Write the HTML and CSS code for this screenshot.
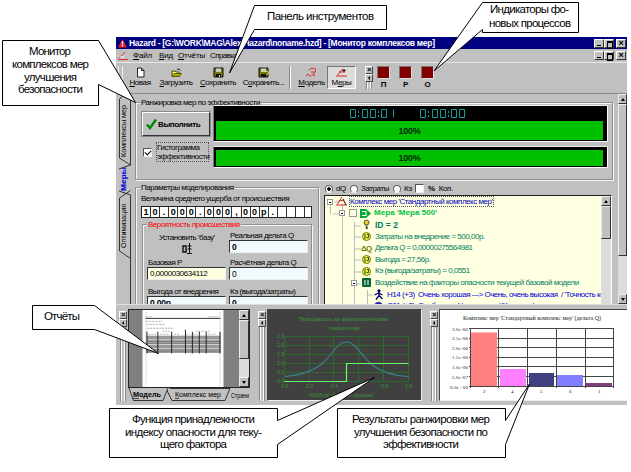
FILE: index.html
```html
<!DOCTYPE html>
<html lang="ru">
<head>
<meta charset="utf-8">
<title>Hazard</title>
<link rel="stylesheet" href="styles.css">
</head>
<body>
<div class="window">
  <header class="titlebar">
    <svg class="app-icon" viewBox="0 0 10 10"><path d="M5 0 10 9.5H0Z" fill="#e02020"/><path d="M5 2.5V6M5 7v1.4" stroke="#fff" stroke-width="1.5"/></svg>
    <span class="caption">Hazard - [G:\WORK\MAG\Alex\Hazard\noname.hzd] - [Монитор комплексов мер]</span>
    <span class="winbtns"><i class="b3 min"></i><i class="b3 res"></i><i class="b3 cls">×</i></span>
  </header>
  <nav class="menu">
    <svg class="menu-icon" viewBox="0 0 10 10"><path d="M7 1 1 7.5M0 8.500H10" stroke="#e03030" fill="none"/><path d="M2 6H6" stroke="#fff"/></svg>
    <span class="m1"><u>Ф</u>айл</span><span class="m2"><u>В</u>ид</span><span class="m3"><u>О</u>тчёты</span><span class="m4">Справка</span>
    <span class="winbtns"><i class="b3 min"></i><i class="b3 res"></i><i class="b3 cls">×</i></span>
  </nav>
  <div class="toolbar">
    <i class="grip"></i>
    <div class="tool t1"><svg viewBox="0 0 11 11"><path d="M2.500 1H6.500L9 3.500V10H2.500Z" fill="#fff" stroke="#222"/><path d="M6.500 1V3.500H9" fill="none" stroke="#222"/></svg><span><u>Н</u>овая</span></div>
    <div class="tool t2"><svg viewBox="0 0 11 11"><path d="M1 9V4H4L5 5H8V6.500" fill="#ff6" stroke="#440"/><path d="M1 9.500 3 6.500H10.500L8.500 9.500Z" fill="#aa0" stroke="#440" stroke-width=".8"/><path d="M6 2.500Q8 1 9.500 3.500" fill="none" stroke="#222"/></svg><span><u>З</u>агрузить</span></div>
    <div class="tool t3"><svg viewBox="0 0 11 11"><path d="M1 1H10V10H1Z" fill="#770" stroke="#111"/><path d="M3 1.500H8V5H3Z" fill="#ccc"/><path d="M3 7H8V10H3Z" fill="#111"/><path d="M6 8h1v2H6z" fill="#ddd"/></svg><span><u>С</u>охранить</span></div>
    <div class="tool t4"><svg viewBox="0 0 11 11"><path d="M1 1H10V10H1Z" fill="#770" stroke="#111"/><path d="M3 1.500H8V5H3Z" fill="#ccc"/><path d="M3 7H8V10H3Z" fill="#111"/><path d="M7 4.500 9 4 10.500 6 9 8" fill="none" stroke="#ee3"/></svg><span>С<u>о</u>хранить...</span></div>
    <i class="vsep"></i>
    <div class="tool t5"><svg viewBox="0 0 11 11"><path d="M3 3.500Q4 0 9.500 2V5H5M8 5V8M0 9 2 7 4 9.500 6 7.500 9 9" fill="none" stroke="#d33"/></svg><span><u>М</u>одель</span></div>
    <div class="tool t6"><svg viewBox="0 0 11 11"><path d="M7 1.500 1.500 8M3 5H9M0 9H11" fill="none" stroke="#d22"/><path d="M8 2v3M6.500 3.500h3" stroke="#111"/></svg><span>М<u>е</u>ры</span></div>
    <div class="dockctl small"><i class="x">×</i><i class="a"></i><i class="bars"></i></div>
    <div class="lamp"><i></i>П</div><div class="lamp"><i></i>Р</div><div class="lamp"><i></i>О</div>
  </div>
  <main class="work">
    <aside class="tabs">
      <svg viewBox="0 0 15 210">
        <path d="M14.500 96.500 3.500 104V157L14.500 164.500" fill="#c0c0c0" stroke="#333"/>
        <path d="M14.500 0.500 9 0.500 3.500 5V64L14.500 71" fill="#c0c0c0" stroke="#333"/>
        <path d="M14.500 0V71L3 75M3 97 14.500 101V210" fill="none" stroke="#333"/>
        <text transform="translate(10 63) rotate(-90)" textLength="52" lengthAdjust="spacingAndGlyphs">Комплексы мер</text>
        <text class="on" transform="translate(10 97) rotate(-90)" textLength="24" lengthAdjust="spacingAndGlyphs">Меры</text>
        <text transform="translate(10 154) rotate(-90)" textLength="44" lengthAdjust="spacingAndGlyphs">Оптимизация</text>
      </svg>
    </aside>
    <div class="page">
      <fieldset class="rank">
        <legend>Ранжировка мер по эффективности</legend>
        <div class="rank-left">
          <button class="run"><svg viewBox="0 0 11 12"><path d="M1 6.500 4 10 10 1.500" fill="none" stroke="#080" stroke-width="2.400"/></svg>Выполнить</button>
          <label class="histo"><i class="cb on"></i><span>Гистограмма<br>эффективности</span></label>
        </div>
        <div class="bars-col">
          <div class="black big">
            <svg class="lcd" viewBox="0 0 387 12"><g fill="none" stroke="#189a9a">
              <path d="M134.500 1.500h5v8h-5zM146.500 1.500h5v8h-5zM154.500 1.500h5v8h-5zM165.500 1.500h5v8h-5zM177.500 1.500v8M142.500 3v2M142.500 7v2M162.500 3v2M162.500 7v2"/>
              <path d="M204.500 1.500h5v8h-5zM216.500 1.500h5v8h-5zM224.500 1.500h5v8h-5zM235.500 1.500h5v8h-5zM243.500 1.500h5v8h-5zM212.500 3v2M212.500 7v2M232.500 3v2M232.500 7v2"/></g></svg>
            <div class="green">100%</div>
          </div>
          <div class="black"><div class="green">100%</div></div>
        </div>
      </fieldset>
      <div class="columns">
        <fieldset class="params">
          <legend>Параметры моделирования</legend>
          <div class="avg">Величина среднего ущерба от происшествия</div>
          <div class="cells"><i>1</i><i>0</i><i>.</i><i>0</i><i>0</i><i>0</i><i>.</i><i>0</i><i>0</i><i>0</i><i>,</i><i>0</i><i>0</i><i>р</i><i>.</i><i></i><i></i><i></i><i></i></div>
          <fieldset class="prob">
            <legend>Вероятность происшествия</legend>
            <div class="grid">
              <div class="base">Установить 'базу'<svg viewBox="0 0 12 11"><path d="M2 3h3v6H2z" fill="none" stroke="#111" stroke-width="1.400"/><path d="M8.500 0V10M6 10.500H11M6.500 3H10.500M6.500 6H10.500" stroke="#111"/></svg></div>
              <div class="f real"><span>Реальная дельта Q</span><b class="in">0</b></div>
              <div class="f"><span>Базовая P</span><b class="in yel">0,0000030634112</b></div>
              <div class="f"><span>Расчётная дельта Q</span><b class="in thin">0</b></div>
              <div class="f"><span>Выгода от внедрения</span><b class="in">0,00р</b></div>
              <div class="f"><span>Кэ (выгода/затраты)</span><b class="in">0</b></div>
            </div>
          </fieldset>
        </fieldset>
        <section class="right">
          <div class="radios">
            <i class="rd on"></i><span class="r1">dQ</span><i class="rd"></i><span class="r2">Затраты</span><i class="rd"></i><span class="r3">Кэ</span><i class="cb"></i><b class="r4">%</b><span>Коп.</span>
          </div>
          <div class="tree">
            <div class="rows">
              <svg class="lines" viewBox="0 0 276 109"><path d="M9.500 6H14M5.500 8V18M17.500 8V109M8 18H14M29.500 26V109M29.500 30H36M29.500 41H36M29.500 53H36M29.500 64H36M29.500 76H36M29.500 88H36M42.500 94V109M42.500 99H48" fill="none" stroke="#bbb"/></svg>
              <div class="row l0"><i class="pm"></i><svg class="ic" viewBox="0 0 11 11"><path d="M6 1 1.500 8M3 5 8 4M0 9H11" fill="none" stroke="#d22"/><path d="M7 3 10 9" stroke="#111"/></svg><span class="sel">Комплекс мер 'Стандартный комплекс мер'</span></div>
              <div class="row l1"><i class="pm"></i><i class="sq"></i><svg class="ic" viewBox="0 0 11 11"><path d="M0 1H6L11 5.500 6 10H0Z" fill="#0a3"/><path d="M2 3.500H6M2 7.500H6M6 3v5" stroke="#fff"/></svg><span>Мера 'Мера 500'</span></div>
              <div class="row l2 bold"><svg class="ic" viewBox="0 0 11 11"><circle cx="5.500" cy="3.500" r="2.500" fill="#dc3" stroke="#552"/><path d="M5.500 6V10M5.500 9H7" stroke="#552" stroke-width="1.500"/></svg><span>ID = 2</span></div>
              <div class="row l2"><svg class="ic" viewBox="0 0 11 11"><circle cx="5.500" cy="5.500" r="4" fill="#ee4" stroke="#770"/><path d="M4 3v5M6 3.500h1.500v3H5.500" fill="none" stroke="#252"/></svg><span>Затраты на внедрение = 500,00р.</span></div>
              <div class="row l2"><b class="ic dq">ΔQ</b><span class="w4">Дельта Q = 0,00000275564981</span></div>
              <div class="row l2"><svg class="ic" viewBox="0 0 11 11"><circle cx="5.500" cy="5.500" r="4" fill="#ee4" stroke="#770"/><path d="M4 3v5M6 3.500h1.500v3H5.500" fill="none" stroke="#252"/></svg><span>Выгода = 27,56р.</span></div>
              <div class="row l2"><svg class="ic" viewBox="0 0 11 11"><circle cx="5.500" cy="5.500" r="4" fill="#ee4" stroke="#770"/><path d="M4 3v5M6 3.500h1.500v3H5.500" fill="none" stroke="#252"/></svg><span>Кэ (выгода/затраты) = 0,0551</span></div>
              <div class="row l2 sub"><i class="pm"></i><svg class="ic" viewBox="0 0 11 11"><rect x="1" y="1" width="9" height="9" rx="1" fill="#063"/><path d="M4 3v5M7 3v5" stroke="#fff"/></svg><span>Воздействие на факторы опасности текущей базовой модели</span></div>
              <div class="row l3"><svg class="ic" viewBox="0 0 11 11"><circle cx="6" cy="1.800" r="1.600" fill="#007"/><path d="M6 3V6.500L3 10.500M6 6.500 9.500 10M1.500 6 5.500 4 9.500 6" fill="none" stroke="#007" stroke-width="1.300"/></svg><span>H14 (+3)&nbsp; Очень хорошая ---&gt; Очень, очень высокая&nbsp; / 'Точность контроля'</span></div>
              <div class="row l3"><svg class="ic" viewBox="0 0 11 11"><circle cx="5.500" cy="5.500" r="4.500" fill="#22a"/></svg><span>С01 (+2)&nbsp; Слабая ---&gt; Умеренная&nbsp; / 'Качество'</span></div>
            </div>
            <div class="sb"><i class="up"></i><i class="thumb t33"></i></div>
          </div>
        </section>
      </div>
    </div>
    <div class="sb main-sb"><i class="up"></i><i class="thumb t150"></i><i class="track"></i><i class="dn"></i></div>
  </main>
  <footer class="docks">
    <div class="dockctl"><i class="x">×</i><i class="a"></i><i class="bars"></i></div>
    <section class="report">
      <div class="preview">
        <svg class="paper" viewBox="0 0 82 78"><rect width="82" height="78" fill="#fff"/>
          <path d="M3.500 2V78M78.500 2V78" stroke="#bbb" stroke-dasharray="1 1"/>
          <path d="M3 8.500H79" stroke="#333"/><path d="M4 7h5M66 7h12M4 11.500h16M5 14.500h18M5 18.500h26" stroke="#aaa" stroke-dasharray="2 1"/>
          <path d="M20 21.500h8M54 21.500h14M6 24.500h8M18 24.500h8M32 24.500h6M44 24.500h4M51 24.500h4M66 24.500h9" stroke="#bbb" stroke-dasharray="2 1"/>
          <rect x="4" y="26" width="75" height="4" fill="#999"/><rect x="4" y="35" width="75" height="4" fill="#999"/>
          <path d="M4 31.500H79M4 33.500H79M4 40.500H79M4 42.500H79" stroke="#222"/>
          <path d="M4.500 22V44M15.500 22V44M29.500 22V44M43.500 20V44M50.500 22V44M57.500 22V44M64.500 22V44M78.500 22V44" stroke="#222"/></svg>
        <div class="sb"><i class="up"></i><i class="thumb t38"></i><i class="track"></i><i class="dn"></i></div>
      </div>
      <svg class="sheet-tabs" viewBox="0 0 122 14"><path d="M42 0.500H102L97 12.500H44L38 0.500" fill="#c0c0c0" stroke="#333"/><path d="M1 0 5.500 12.500H35L40 0" fill="#c0c0c0" stroke="#333"/>
        <text class="b" x="5" y="9" textLength="28" lengthAdjust="spacingAndGlyphs">Модель</text><text x="47" y="9" textLength="46" lengthAdjust="spacingAndGlyphs">Комплекс мер</text><text x="103" y="10" textLength="18" lengthAdjust="spacingAndGlyphs">Страни</text><path d="M5 10.500h6M47 10.500h4" stroke="#111" stroke-width=".7"/></svg>
    </section>
    <div class="dockctl d2"><i class="x">×</i><i class="a"></i><i class="bars"></i></div>
    <svg class="chart dark" viewBox="0 0 153 90">
      <rect width="153" height="90" fill="#404040"/>
      <g class="gt"><text x="31" y="11" textLength="89" lengthAdjust="spacingAndGlyphs">Пригодность по физиологическим</text><text x="61" y="19.500" textLength="30" lengthAdjust="spacingAndGlyphs">показателям</text><text x="41" y="86.500" textLength="64" lengthAdjust="spacingAndGlyphs">Н01(Игра) =0 - Полёт (среднее)</text>
      <text x="9" y="28">2.3</text><text x="9" y="37">2.0</text><text x="9" y="46">1.5</text><text x="9" y="55">1.0</text><text x="9" y="64">0.1</text><text x="9" y="73">0.0</text>
      <text x="13" y="77.500">0.0</text><text x="38" y="77.500">0.2</text><text x="63" y="77.500">0.4</text><text x="88" y="77.500">0.6</text><text x="113" y="77.500">0.8</text><text x="137" y="77.500">1.0</text></g>
      <path d="M16.500 26.500H140.500M16.500 35.500H140.500M16.500 44.500H140.500M16.500 53.500H140.500M16.500 62.500H140.500M16.500 71.500H140.500M16.500 26.500V72M41.500 26.500V72M65.500 26.500V72M90.500 26.500V72M115.500 26.500V72M140.500 26.500V72" stroke="#2c6a2c" fill="none"/>
      <path d="M16.500 66.500C36 65 48 60 57 51C66 42 70 32 78.500 32C87 32 93 45 103 54C113 62 124 66 140.500 66.500" fill="none" stroke="#3c8088" stroke-width="1.100"/>
      <path d="M16.500 71.500H78.500V53.500H140.500" fill="none" stroke="#6f6" stroke-width="1.200"/>
    </svg>
    <div class="dockctl d3"><i class="x">×</i><i class="a"></i><i class="bars"></i></div>
    <svg class="chart light" viewBox="0 0 187 90">
      <rect width="187" height="90" fill="#fff"/>
      <g class="bt"><text x="23" y="10" textLength="138" lengthAdjust="spacingAndGlyphs" class="ttl">Комплекс мер 'Стандартный комплекс мер' (дельта Q)</text>
      <text x="12" y="20.500" textLength="16">3.0e-06</text><text x="12" y="30" textLength="16">2.5e-06</text><text x="12" y="39.500" textLength="16">2.0e-06</text><text x="12" y="49" textLength="16">1.5e-06</text><text x="12" y="59" textLength="16">1.0e-06</text><text x="12" y="68.500" textLength="16">5.0e-07</text><text x="10" y="78.500" textLength="18">0.0e+00</text>
      <text x="43" y="83">2</text><text x="71" y="83">4</text><text x="100" y="83">5</text><text x="129" y="83">6</text><text x="158" y="83">1</text></g>
      <path d="M29 18.500H173.500M29 28.500H173.500M29 37.500H173.500M29 47.500H173.500M29 56.500H173.500M29 66.500H173.500M29 76.500H173.500M30.500 18V78M58.500 18V78M87.500 18V78M116.500 18V78M145.500 18V78M173.500 18V78" fill="none" stroke="#444"/>
      <path d="M31 22h26v54H31z" fill="#ff8080"/><path d="M31 22.500h26" stroke="#fbb"/><path d="M60 59h26v17H60z" fill="#ff80ff"/><path d="M89 63h25v13H89z" fill="#404080"/><path d="M117 65h26v11H117z" fill="#8080ff"/><path d="M146 73h26v3H146z" fill="#804080"/>
    </svg>
  </footer>
</div>

<svg class="callouts" viewBox="0 0 631 472">
  <g fill="#fff" stroke="#000">
    <path d="M254.500 5.500H386.500V29.500H254.500L229.500 73Z"/>
    <path d="M482.500 2.500H578.500V32.500H482.500V29.500L434 71Z"/>
    <path d="M2.500 40.500H98.500L135.500 102.500 98.500 84.500V105.500H2.500Z"/>
    <path d="M32.500 305.500H94.500L158.500 353.500 94.500 329.500H32.500Z"/>
    <path d="M109.500 408.500H277.500V420.500L374.500 377.500 277.500 444.500V457.500H109.500Z"/>
    <path d="M337.500 408.500H505.500V420.500L529.500 384 505.500 444.500V457.500H337.500Z"/>
  </g>
  <g class="note">
    <text x="267" y="20" textLength="107">Панель инструментов</text>
    <text x="490" y="13" textLength="79">Индикаторы фо-</text><text x="489" y="27" textLength="82">новых процессов</text>
    <text x="29" y="55" textLength="42">Монитор</text><text x="12" y="68" textLength="77">комплексов мер</text><text x="24" y="81" textLength="53">улучшения</text><text x="18" y="93" textLength="65">безопасности</text>
    <text x="44" y="320" textLength="36">Отчёты</text>
    <text x="132" y="423" textLength="123">Функция принадлежности</text><text x="125" y="436" textLength="137">индексу опасности для теку-</text><text x="160" y="448" textLength="67">щего фактора</text>
    <text x="352" y="423" textLength="138">Результаты ранжировки мер</text><text x="354" y="436" textLength="134">улучшения безопасности по</text><text x="383" y="448" textLength="76">эффективности</text>
  </g>
</svg>
</body>
</html>
```
FILE: styles.css
```css
* { box-sizing: border-box; }
body { margin: 0; width: 631px; height: 472px; overflow: hidden; position: relative; background: #fff; }
i { font-style: normal; display: block; flex: none; }
svg { display: block; flex: none; }
u { text-underline-offset: 1px; text-decoration-thickness: 1px; }
.window { margin: 37px 0 0 116px; width: 511px; height: 368px; background: #c0c0c0; overflow: hidden;
  font: 8px/10px "Liberation Sans", sans-serif; letter-spacing: -.47px; color: #000; white-space: nowrap; }

.titlebar { height: 12px; background: #000080; color: #fff; display: flex; align-items: center; padding: 0 1px 0 2px; }
.app-icon { width: 9px; height: 9px; margin-right: 2px; }
.caption { font: bold 8.5px/12px "Liberation Sans", sans-serif; letter-spacing: -.29px; }
.winbtns { margin-left: auto; display: flex; }
.b3 { width: 10px; height: 9px; background: #c0c0c0; border: 1px solid; border-color: #fff #333 #333 #fff; color: #000; font: bold 9px/7px "Liberation Sans", sans-serif; text-align: center; }
.cls { margin-left: 2px; }
.min { padding: 5px 2px 0; }
.min::after { content: ""; display: block; height: 1px; background: #000; width: 4px; }
.res { padding: 1px 2px; }
.res::after { content: ""; display: block; width: 4px; height: 5px; border: 1px solid #000; border-top-width: 2px; }

.menu { height: 13px; display: flex; align-items: center; padding: 0 1px 0 2px; letter-spacing: -.15px; }
.menu-icon { width: 10px; height: 10px; margin-right: 5px; }
.m1 { width: 26px; } .m2 { width: 19px; } .m3 { width: 32px; }
.m4 { letter-spacing: -.6px; }

.toolbar { height: 32px; border-top: 1px solid #e8e8e8; border-bottom: 1px solid #888; display: flex; padding-top: 3px; }
.grip { width: 5px; height: 24px; margin: 0 0 0 2px; border: solid #eee; border-width: 0 1px; }
.tool { display: flex; flex-direction: column; align-items: center; height: 23px; letter-spacing: -.4px; }
.tool svg { width: 11px; height: 11px; margin-top: 1px; }
.tool span { line-height: 10px; }
.t1 { width: 34px; } .t2 { width: 38px; } .t3 { width: 46px; } .t4 { width: 45px; }
.vsep { width: 2px; height: 23px; margin: 0 5px 0 3px; background: #888; border-right: 1px solid #fff; }
.t5 { width: 31px; }
.t6 { width: 29px; background: #dcdcdc; border: 1px solid; border-color: #777 #fff #fff #777; }
.t6 svg { margin-top: 0; }
.dockctl { width: 8px; height: 90px; display: flex; flex-direction: column; align-items: center; margin: 6px 1px 4px 3px; }
.dockctl .x, .dockctl .a { width: 8px; height: 8px; border: 1px solid; border-color: #fff #444 #444 #fff; font: bold 7px/6px "Liberation Sans", sans-serif; text-align: center; }
.dockctl .a::after { content: ""; display: block; width: 0; margin: 1px 0 0 2px; border: 2px solid transparent; border-right: 2px solid #000; border-left: 0; }
.dockctl .bars { flex: 1; width: 6px; border: solid #888; border-width: 0 1px; background: linear-gradient(90deg, #fff 1px, #c0c0c0 1px, #c0c0c0 3px, #fff 3px); }
.dockctl.small { margin: 0 -2px 0 9px; height: 23px; }
.lamp { margin-left: 3px; width: 19px; display: flex; flex-direction: column; align-items: center; font: bold 8px/10px "Liberation Sans", sans-serif; }
.lamp i { width: 13px; height: 13px; background: #800000; border: 1px solid; border-color: #777 #ddd #ddd #777; margin-bottom: 1px; }

.work { height: 210px; display: flex; }
.tabs { width: 15px; }
.tabs svg { width: 15px; height: 210px; }
.tabs text { font: 7.5px "Liberation Sans", sans-serif; letter-spacing: 0; }
.tabs .on { font-weight: bold; fill: #0000e0; }
.page { width: 487px; height: 210px; padding: 4px 5px 0 4px; overflow: hidden; }
fieldset { margin: 0; padding: 0; min-width: 0; border: 1px solid #909090; box-shadow: 1px 1px 0 #f4f4f4, inset 1px 1px 0 #f4f4f4; }
legend { padding: 0 1px; margin-left: 4px; line-height: 9px; background: #c0c0c0; }
.rank { height: 82px; display: grid; grid-template-columns: 77px 395px; }
.rank-left { padding: 5px 0 0 6px; }
.run { width: 68px; height: 24px; padding: 0 0 0 3px; background: #c0c0c0; border: 1px solid; border-color: #fff #333 #333 #fff; outline: 1px solid #888; display: flex; align-items: center; gap: 1px; font: bold 8px "Liberation Sans", sans-serif; letter-spacing: -.4px; }
.run svg { width: 11px; height: 12px; }
.histo { display: flex; align-items: center; margin-top: 6px; gap: 2px; line-height: 9px; }
.histo span { border: 1px dotted #555; width: 53px; }
.cb { width: 9px; height: 9px; background: #fff; border: 1px solid; border-color: #555 #eee #eee #555; }
.histo .cb { margin: 0 2px 0 1px; }
.cb.on::after { content: ""; display: block; width: 5px; height: 3px; margin: 1px; border: solid #000; border-width: 0 0 1.5px 1.5px; transform: rotate(-45deg); }
.bars-col { display: grid; grid-template-rows: 37px 22px; gap: 4px; margin-top: -2px; align-content: start; }
.black { background: #000; border: 1px solid; border-color: #eee #fff #fff #777; padding: 3px 4px 2px 2px; }
.big { padding-top: 2px; }
.lcd { width: 387px; height: 12px; margin-bottom: 1px; }
.green { background: #00c000; height: 16px; line-height: 17px; text-align: center; font-weight: bold; font-size: 9px; letter-spacing: -.2px; color: #002800; }
.big .green { height: 19px; line-height: 20px; }

.columns { display: flex; padding-top: 3px; }
.params { width: 184px; height: 130px; }
.avg { padding: 2px 0 0 5px; line-height: 10px; letter-spacing: -.5px; }
.cells { margin: 2px 6px 0 5px; height: 12px; background: #fff; border: 1px solid #222; display: flex; overflow: hidden; }
.cells i { width: 9.050px; border-right: 1px solid #333; font: bold 9px/10px "Liberation Sans", sans-serif; text-align: center; letter-spacing: 0; }
.prob { margin: 2px 6px 0 6px; height: 100px; }
.prob legend { color: #f00; }
.grid { display: grid; grid-template-columns: 82px 82px; grid-template-rows: 27px 29px 20px; padding: 2px 0 0 4px; }
.base { padding: 2px 0 0 12px; }
.base svg { width: 12px; height: 11px; margin-left: 22px; }
.f span { display: block; padding-left: 1px; line-height: 9px; }
.in { display: block; width: 79px; height: 13px; background: #f0faff; border: 1px solid; border-color: #333 #eee #eee #333; font-size: 8.5px; line-height: 12px; padding-left: 2px; letter-spacing: -.2px; }
.yel { background: #ffffe1; font-weight: normal; font-size: 8px; letter-spacing: -.45px; }
.thin { font-weight: normal; }

.right { margin-left: 5px; width: 288px; }
.radios { display: flex; align-items: center; height: 11px; margin-bottom: 1px; letter-spacing: -.4px; }
.rd { width: 8px; height: 8px; border-radius: 50%; background: #fff; border: 1px solid #666; border-bottom-color: #eee; margin-left: 1px; }
.rd.on { background: radial-gradient(circle, #000 1.500px, #fff 2px); }
.radios span { padding-left: 3px; }
.r1 { width: 16px; } .r2 { width: 34px; } .r3 { width: 14px; } .r4 { padding: 0 1px 0 4px; }
.tree { height: 112px; border: 1px solid #222; border-right-color: #fff; background: #ffffe1; display: flex; }
.rows { width: 276px; overflow: hidden; position: relative; padding-left: 2px; }
.lines { position: absolute; left: 0; top: 0; width: 276px; height: 109px; }
.row { position: relative; display: flex; align-items: center; height: 11.600px; color: #008060; }
.pm { width: 6px; height: 6px; background: linear-gradient(#000, #000) 1px 2px/2px 1px no-repeat #fff; border: 1px solid #999; }
.ic { width: 11px; height: 11px; margin-right: 2px; }
.l0 { color: #0000c0; } .l0 .ic { margin-left: 3px; }
.sel { border: 1px dotted #555; line-height: 9px; }
.l1 { padding-left: 12px; color: #00c040; font-weight: bold; letter-spacing: .05px; }
.sq { width: 8px; height: 8px; border: 1px solid #999; margin: 0 3px 0 4px; }
.l2 { padding-left: 34px; } .l2.bold { font-weight: bold; letter-spacing: 0; }
.l2.bold span { font-size: 8.500px; }
.l2 .ic, .l1 .ic { margin-right: 3px; }
.w4 { letter-spacing: -.55px; }
.row .dq { font: bold 8px/11px "Liberation Sans", sans-serif; color: #770; letter-spacing: -.8px; }
.sub { padding-left: 24px; } .sub .ic { margin-left: 4px; }
.l3 { padding-left: 46px; color: #0000e0; } .l3 .ic { margin-right: 3px; }

.sb { width: 10px; display: flex; flex-direction: column; background: #dcdcdc; }
.up, .dn, .thumb { background: #c0c0c0; border: 1px solid; border-color: #eee #333 #333 #eee; width: 100%; }
.up, .dn { height: 10px; padding: 3px 2px; }
.up::after { content: ""; display: block; width: 0; border: 2px solid transparent; border-bottom: 3px solid #000; border-top: 0; }
.dn::after { content: ""; display: block; width: 0; border: 2px solid transparent; border-top: 3px solid #000; border-bottom: 0; }
.t33 { height: 33px; } .t150 { height: 152px; } .t38 { height: 39px; }
.track { flex: 1; }
.main-sb { width: 9px; }

.docks { height: 101px; border-top: 1px solid #ddd; display: flex; }
.report { width: 122px; margin: 4px 8px 0 0; }
.preview { height: 79px; background: #808080; border: 1px solid #222; display: flex; }
.paper { width: 82px; height: 77px; margin: 0 15px 0 13px; }
.preview .sb { height: 77px; }
.sheet-tabs { width: 122px; height: 14px; }
.sheet-tabs text { font: 7.500px "Liberation Sans", sans-serif; letter-spacing: 0; }
.sheet-tabs .b { font-weight: bold; }
.docks .dockctl.d2, .docks .dockctl.d3 { margin-left: 0; }
.chart { height: 92px; margin-top: 4px; border: 1px solid; border-color: #444 #eee #eee #444; }
.dark { width: 155px; margin-right: 8px; }
.light { width: 189px; }
.gt text { font: 5px "Liberation Sans", sans-serif; fill: #3a9a3a; letter-spacing: 0; }
.bt text { font: 5px "Liberation Serif", serif; fill: #222; letter-spacing: 0; }
.bt .ttl { font-size: 6px; }

.callouts { position: absolute; left: 0; top: 0; width: 631px; height: 472px; }
.note text { font: 11.500px "Liberation Sans", sans-serif; fill: #000; }
```
